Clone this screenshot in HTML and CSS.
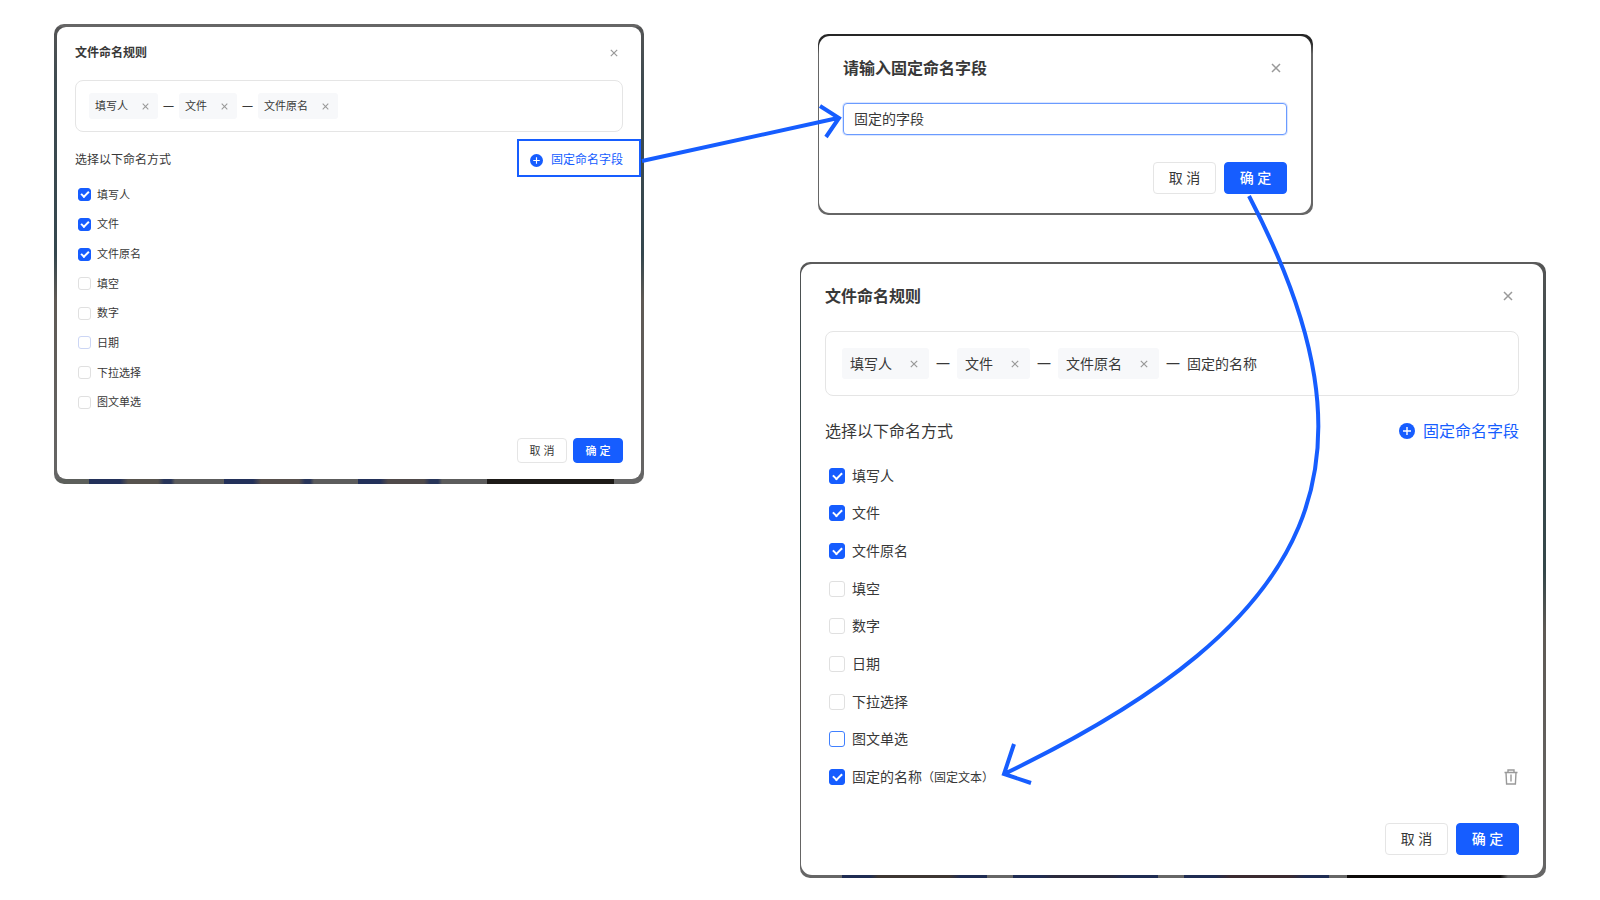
FILE: index.html
```html
<!DOCTYPE html>
<html lang="zh-CN">
<head>
    <meta charset="UTF-8">
    <meta name="viewport" content="width=device-width, initial-scale=1.0">
    <title>文件命名规则</title>
    <link rel="stylesheet" href="styles.css">
</head>
<body>
    <svg class="symbols" aria-hidden="true">
        <symbol id="icon-close" viewBox="0 0 10 10">
            <path d="M1 1 L9 9 M9 1 L1 9" fill="none" stroke="currentColor" stroke-width="1.5"/>
        </symbol>
        <symbol id="icon-plus" viewBox="0 0 16 16">
            <circle cx="8" cy="8" r="8" fill="currentColor"/>
            <path d="M8 4 V12 M4 8 H12" fill="none" stroke="#fff" stroke-width="1.4"/>
        </symbol>
        <symbol id="icon-trash" viewBox="0 0 16 16">
            <path d="M1.5 3.5 H14.5 M5 3.5 V1 H11 V3.5 M3 3.5 L3.6 15 H12.4 L13 3.5 M8 5.5 V12.5" fill="none" stroke="currentColor" stroke-width="1.4"/>
        </symbol>
    </svg>

    <main class="board">
        <section class="frame frame-rule-small">
            <div class="dialog small">
                <header class="dialog-header">
                    <h2>文件命名规则</h2>
                    <button type="button" class="icon-button close" aria-label="关闭"><svg><use href="#icon-close"/></svg></button>
                </header>
                <div class="tags">
                    <span class="tag">填写人<button type="button" class="icon-button" aria-label="移除填写人"><svg><use href="#icon-close"/></svg></button></span>
                    <span class="dash">—</span>
                    <span class="tag">文件<button type="button" class="icon-button" aria-label="移除文件"><svg><use href="#icon-close"/></svg></button></span>
                    <span class="dash">—</span>
                    <span class="tag">文件原名<button type="button" class="icon-button" aria-label="移除文件原名"><svg><use href="#icon-close"/></svg></button></span>
                </div>
                <div class="section-row">
                    <span>选择以下命名方式</span>
                    <button type="button" class="add"><svg><use href="#icon-plus"/></svg>固定命名字段</button>
                </div>
                <div class="options">
                    <div class="option"><label><input type="checkbox" checked>填写人</label></div>
                    <div class="option"><label><input type="checkbox" checked>文件</label></div>
                    <div class="option"><label><input type="checkbox" checked>文件原名</label></div>
                    <div class="option"><label><input type="checkbox">填空</label></div>
                    <div class="option"><label><input type="checkbox">数字</label></div>
                    <div class="option"><label><input type="checkbox" class="fading">日期</label></div>
                    <div class="option"><label><input type="checkbox">下拉选择</label></div>
                    <div class="option"><label><input type="checkbox">图文单选</label></div>
                </div>
                <footer class="dialog-footer">
                    <button type="button" class="btn">取 消</button>
                    <button type="button" class="btn primary">确 定</button>
                </footer>
            </div>
        </section>

        <div class="column">
            <section class="frame frame-prompt">
                <div class="dialog prompt">
                    <header class="dialog-header">
                        <h2 id="prompt-title">请输入固定命名字段</h2>
                        <button type="button" class="icon-button close" aria-label="关闭"><svg><use href="#icon-close"/></svg></button>
                    </header>
                    <input type="text" class="field" value="固定的字段" aria-labelledby="prompt-title">
                    <footer class="dialog-footer">
                        <button type="button" class="btn">取 消</button>
                        <button type="button" class="btn primary">确 定</button>
                    </footer>
                </div>
            </section>

            <section class="frame frame-rule">
                <div class="dialog">
                    <header class="dialog-header">
                        <h2>文件命名规则</h2>
                        <button type="button" class="icon-button close" aria-label="关闭"><svg><use href="#icon-close"/></svg></button>
                    </header>
                    <div class="tags">
                        <span class="tag">填写人<button type="button" class="icon-button" aria-label="移除填写人"><svg><use href="#icon-close"/></svg></button></span>
                        <span class="dash">—</span>
                        <span class="tag">文件<button type="button" class="icon-button" aria-label="移除文件"><svg><use href="#icon-close"/></svg></button></span>
                        <span class="dash">—</span>
                        <span class="tag">文件原名<button type="button" class="icon-button" aria-label="移除文件原名"><svg><use href="#icon-close"/></svg></button></span>
                        <span class="dash">—</span>
                        <span>固定的名称</span>
                    </div>
                    <div class="section-row">
                        <span>选择以下命名方式</span>
                        <button type="button" class="add"><svg><use href="#icon-plus"/></svg>固定命名字段</button>
                    </div>
                    <div class="options">
                        <div class="option"><label><input type="checkbox" checked>填写人</label></div>
                        <div class="option"><label><input type="checkbox" checked>文件</label></div>
                        <div class="option"><label><input type="checkbox" checked>文件原名</label></div>
                        <div class="option"><label><input type="checkbox">填空</label></div>
                        <div class="option"><label><input type="checkbox">数字</label></div>
                        <div class="option"><label><input type="checkbox">日期</label></div>
                        <div class="option"><label><input type="checkbox">下拉选择</label></div>
                        <div class="option"><label><input type="checkbox" class="active">图文单选</label></div>
                        <div class="option">
                            <label><input type="checkbox" checked><span>固定的名称<small>（固定文本）</small></span></label>
                            <button type="button" class="icon-button trash" aria-label="删除"><svg><use href="#icon-trash"/></svg></button>
                        </div>
                    </div>
                    <footer class="dialog-footer">
                        <button type="button" class="btn">取 消</button>
                        <button type="button" class="btn primary">确 定</button>
                    </footer>
                </div>
            </section>
        </div>

        <!-- flow arrows between the dialogs -->
        <svg class="arrows" viewBox="0 0 1600 900" aria-hidden="true">
            <rect x="518" y="140" width="122" height="36" stroke-width="2"/>
            <path d="M642 161 L838 118 M820 106 L839 118 L826 137"/>
            <path d="M1249 196 C1388 462 1324 620 1004 774 M1014 744 L1004 774 L1031 783"/>
        </svg>
    </main>
</body>
</html>
```
FILE: styles.css
```css
*,
*::before {
    box-sizing: border-box;
}

body {
    margin: 0;
    background: #fff;
    color: #383838;
    font-family: "Noto Sans", "Noto Sans CJK SC", sans-serif;
    font-size: 14px;
}

button {
    padding: 0;
    border: 0;
    background: none;
    font: inherit;
    color: inherit;
    cursor: pointer;
}

.symbols {
    display: none;
}

.board {
    position: relative;
    display: grid;
    grid-template-columns: 590fr 746fr;
    column-gap: 156px;
    align-items: start;
    padding: 24px 54px 22px;
}

.column {
    display: flex;
    flex-direction: column;
    gap: 47px;
    padding-top: 10px;
}

.arrows {
    position: absolute;
    top: 0;
    left: 0;
    width: 100%;
    fill: none;
    stroke: #165dff;
    stroke-width: 4;
    pointer-events: none;
}

/* dimmed page left visible around each dialog */
.frame {
    border-radius: 10px;
}

.frame-rule-small {
    padding: 3px 3px 5px;
    background:
        linear-gradient(#666, #666) top / 100% 3px no-repeat,
        linear-gradient(90deg, #5c5f5b 35px, #23315a 35px 66px, #57534e 74px 104px, #283559 110px 117px, #5c5c5c 121px 170px, #23315a 170px 199px, #57504d 207px 245px, #283559 251px 256px, #5c5c5c 260px 304px, #23315a 304px 326px, #504a4a 334px 370px, #283559 376px 384px, #5c5c5c 388px 433px, #1d1a17 433px 560px, #666 560px) bottom / 100% 5px no-repeat,
        linear-gradient(#555, #3f4b50 12%, #34474e 50%, #5f5a55 60%, #666);
}

.frame-prompt {
    margin: 0 233px 0 18px;
    padding: 2px 2px 2px 1px;
    background: linear-gradient(#262626 8px, #666 20px);
}

.frame-rule {
    padding: 2px 3px 3px 1px;
    background:
        linear-gradient(#5c5c5c, #5c5c5c) top / 100% 2px no-repeat,
        linear-gradient(90deg, #666 42px, #1f2c52 42px 70px, #3d3632 78px 150px, #1f2c52 160px 187px, #666 187px 213px, #1f2c52 213px 240px, #2b2a3c 255px 310px, #1f2c52 325px 358px, #666 358px 384px, #1f2c52 384px 415px, #3b2a30 430px 490px, #1f2c52 505px 529px, #666 529px 547px, #0d0a09 547px 700px, #666 708px) bottom / 100% 3px no-repeat,
        linear-gradient(#555, #3f4b4d 12%, #34474a 50%, #5f5a55 60%, #666);
}

.dialog {
    padding: 20px 24px;
    border-radius: 11px;
    background: #fff;
}

.dialog-header {
    display: flex;
    align-items: center;
    justify-content: space-between;
    line-height: 24px;
}

.dialog-header h2 {
    margin: 0;
    font-size: 16px;
    font-weight: 700;
}

.icon-button {
    display: flex;
    color: #999;
}

.icon-button svg {
    width: 8px;
    height: 8px;
}

.close {
    padding: 6px;
}

.close svg {
    width: 10px;
    height: 10px;
}

.tags {
    display: flex;
    align-items: center;
    gap: 7px;
    margin-top: 23px;
    padding: 16px;
    border: 1px solid #e5e5e5;
    border-radius: 8px;
    line-height: 31px;
}

.tag {
    display: flex;
    align-items: center;
    gap: 18px;
    padding: 0 11px 0 8px;
    border-radius: 3px;
    background: #f7f8fa;
}

.dash {
    padding-bottom: 2px;
    line-height: 20px;
}

.section-row {
    display: flex;
    justify-content: space-between;
    margin-top: 23px;
    font-size: 16px;
    line-height: 24px;
}

.add {
    display: flex;
    align-items: center;
    gap: 8px;
    color: #165dff;
}

.add svg {
    width: 16px;
    height: 16px;
}

.options {
    display: grid;
    grid-auto-rows: 1fr;
    min-height: 339px;
    margin-top: 14px;
    padding-left: 4px;
}

.option {
    display: flex;
    align-items: center;
    justify-content: space-between;
}

.option label {
    display: flex;
    align-items: center;
    gap: 7px;
    line-height: 20px;
}

.option small {
    font-size: 12px;
}

.option input {
    display: grid;
    place-items: center;
    width: 16px;
    height: 16px;
    margin: 0;
    appearance: none;
    border: 1px solid #e0e0e0;
    border-radius: 3px;
    background: #fff;
}

.option input.fading {
    border-color: #ccd6f5;
}

.option input.active {
    border-color: #4080ff;
}

.option input:checked {
    border-color: #165dff;
    background: #165dff;
}

.option input:checked::before {
    content: "";
    width: 9px;
    height: 6px;
    margin-bottom: 2px;
    border: solid #fff;
    border-width: 0 0 2px 2px;
    transform: rotate(-45deg);
}

.trash svg {
    width: 16px;
    height: 16px;
}

.dialog-footer {
    display: flex;
    justify-content: flex-end;
    gap: 8px;
    margin-top: 27px;
}

.btn {
    width: 63px;
    height: 32px;
    padding-bottom: 2px;
    border: 1px solid #e5e5e5;
    border-radius: 4px;
    background: #fff;
}

.btn.primary {
    border-color: #165dff;
    background: #165dff;
    color: #fff;
    font-weight: 500;
}

.prompt {
    padding-bottom: 19px;
}

.field {
    display: block;
    width: 100%;
    height: 32px;
    margin-top: 23px;
    padding: 0 10px 2px;
    border: 1px solid #6a9bff;
    border-radius: 4px;
    box-shadow: 0 0 0 1px #dbe6ff;
    font: inherit;
    color: inherit;
    outline: none;
}

/* compact version of the dialog */
.small {
    padding: 17px 18px 16px;
    border-radius: 9px;
    font-size: 11px;
}

.small .dialog-header {
    line-height: 18px;
}

.small .dialog-header h2,
.small .section-row {
    font-size: 12px;
}

.small .icon-button svg {
    width: 7px;
    height: 7px;
}

.small .close svg {
    width: 8px;
    height: 8px;
}

.small .close {
    padding: 5px;
}

.small .tags {
    gap: 5px;
    margin-top: 18px;
    padding: 12px 13px;
    line-height: 26px;
}

.small .tag {
    gap: 14px;
    padding: 0 9px 0 6px;
}

.small .section-row {
    margin-top: 19px;
    line-height: 18px;
}

.small .add svg {
    width: 13px;
    height: 13px;
}

.small .options {
    min-height: 237px;
    margin-top: 11px;
    padding-left: 3px;
}

.small .option label {
    gap: 6px;
}

.small .option input {
    width: 13px;
    height: 13px;
}

.small .option input:checked::before {
    width: 8px;
    height: 5px;
}

.small .dialog-footer {
    gap: 6px;
    margin-top: 21px;
}

.small .btn {
    width: 50px;
    height: 25px;
}
```
